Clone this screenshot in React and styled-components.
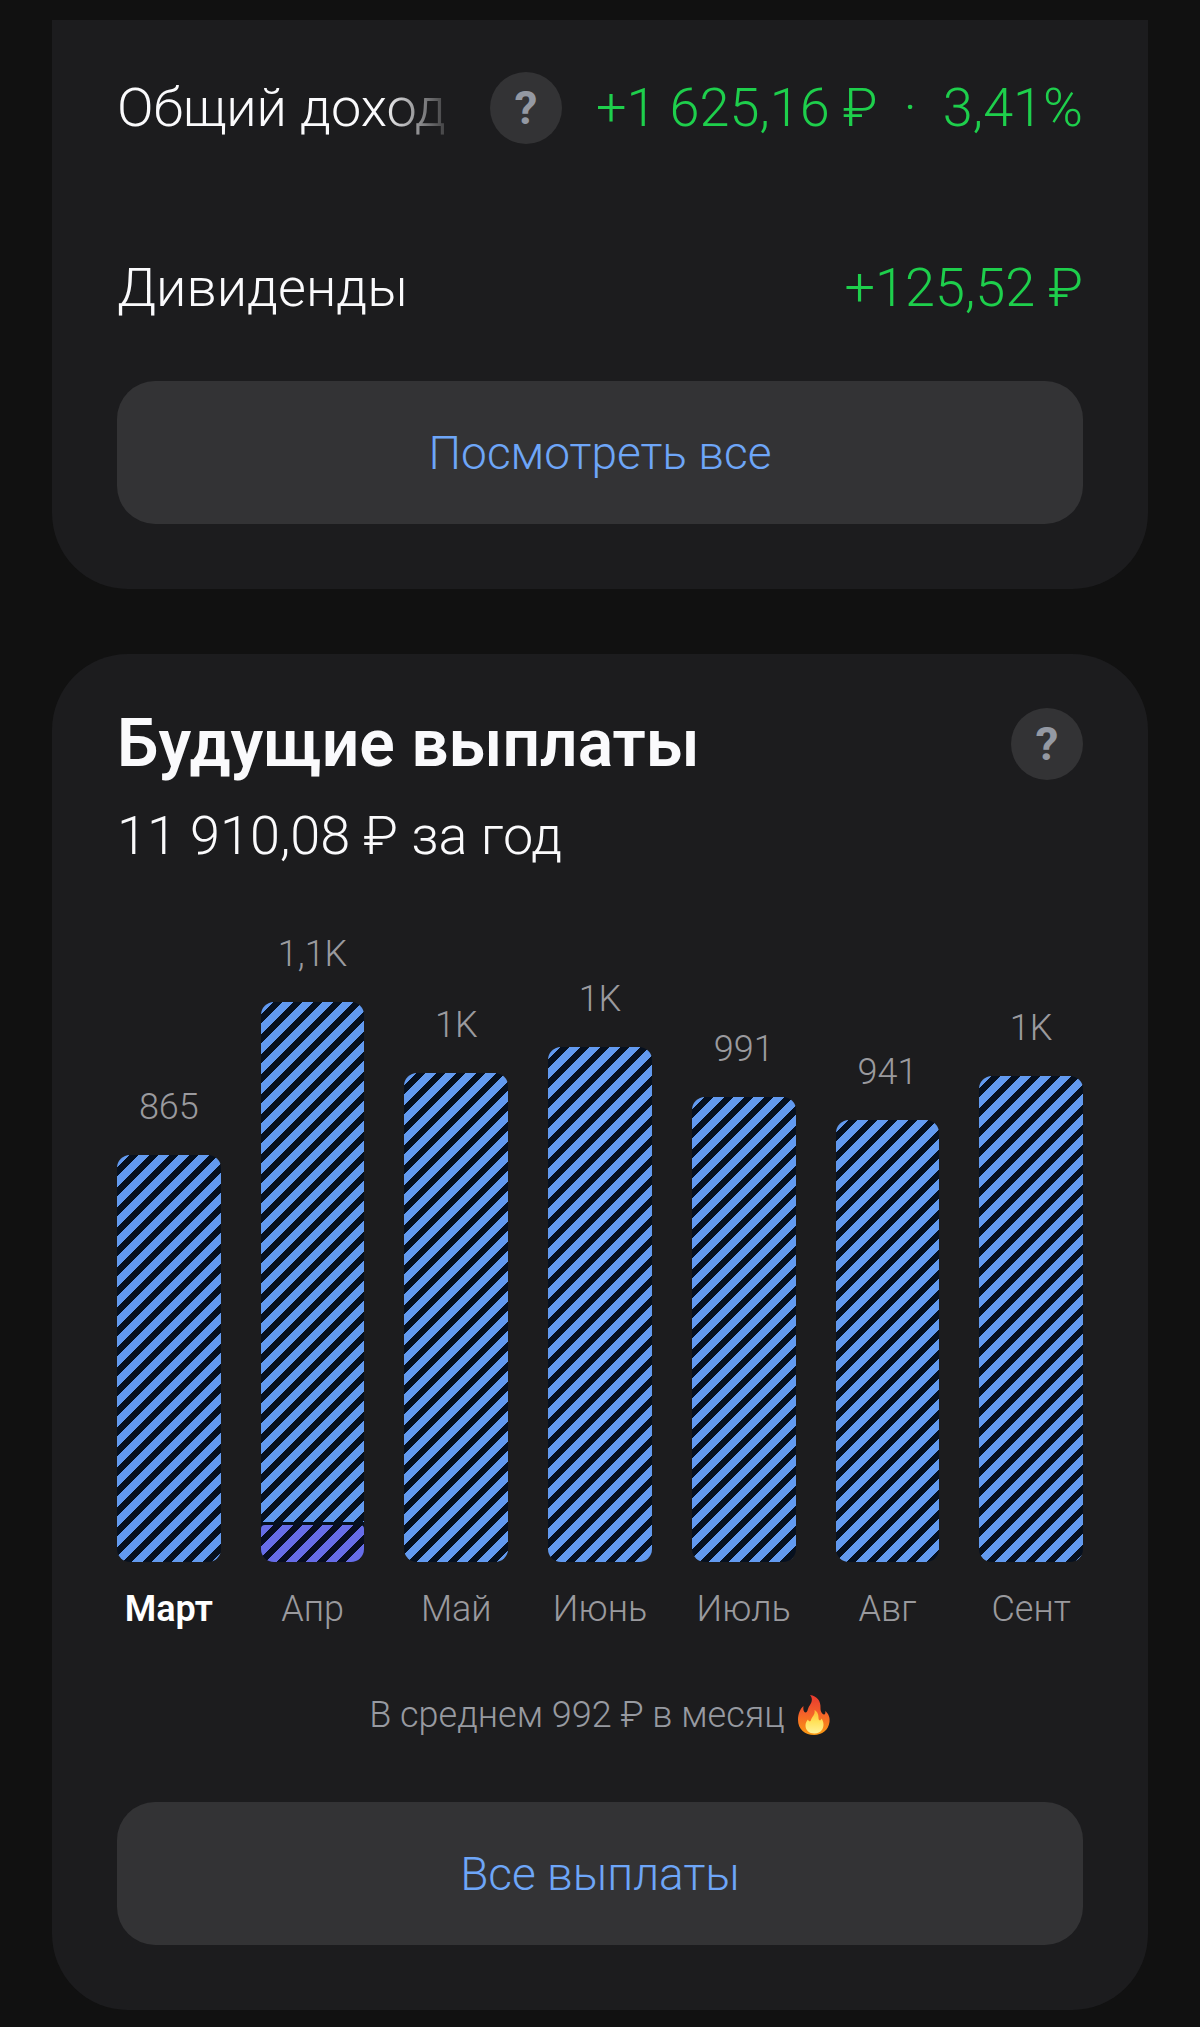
import React from 'react';
import styled, { createGlobalStyle, css } from 'styled-components';

const GlobalStyle = createGlobalStyle`
  * {
    box-sizing: border-box;
  }

  body {
    margin: 0;
    background: #111111;
    color: #fafafc;
    font-family: Roboto, "Noto Sans", sans-serif;
  }
`;

const Page = styled.main`
  display: flex;
  flex-direction: column;
  gap: 65px;
  padding: 20px 52px 17px;
`;

const Card = styled.section`
  display: flex;
  flex-direction: column;
  padding: ${({ $continued }) => ($continued ? '52px' : '54px')} 65px 65px;
  border-radius: ${({ $continued }) => ($continued ? '0 0 76px 76px' : '76px')};
  background: #1c1c1e;
`;

const Rows = styled.dl`
  display: flex;
  flex-direction: column;
  gap: 108px;
  margin: 0 0 57px;
`;

const Row = styled.div`
  display: flex;
  align-items: center;
  justify-content: space-between;
  gap: 34px;
  height: 72px;
  font-size: 54px;
  line-height: 68px;
  font-weight: 300;
  white-space: nowrap;
`;

const RowLabel = styled.dt`
  display: flex;
  align-items: center;
  gap: 32px;
  flex: 1;
  min-width: 0;
`;

const LabelText = styled.span`
  flex: 1;
  min-width: 0;
  overflow: hidden;
  ${({ $fade }) =>
    $fade &&
    css`
      mask-image: linear-gradient(to left, transparent, #000 76px);
    `}
`;

const Amount = styled.dd`
  display: flex;
  gap: 26px;
  margin: 0;
  color: #1ecf4c;
`;

const HelpButton = styled.button`
  flex: none;
  width: 72px;
  height: 72px;
  padding: 0;
  border: none;
  border-radius: 50%;
  background: #333335;
  color: #9499a3;
  font-family: inherit;
  font-size: 46px;
  line-height: 72px;
  font-weight: 700;
  text-align: center;
  cursor: pointer;
`;

const WideButton = styled.button`
  width: 100%;
  height: 143px;
  border: none;
  border-radius: 38px;
  background: #333335;
  color: #6ea6f8;
  font-family: inherit;
  font-size: 46px;
  line-height: 56px;
  font-weight: 300;
  cursor: pointer;
`;

const Header = styled.header`
  display: flex;
  align-items: center;
  justify-content: space-between;
  height: 72px;
`;

const Title = styled.h2`
  margin: 0;
  font-size: 66px;
  line-height: 72px;
  font-weight: 600;
`;

const Total = styled.p`
  margin: 20px 0 62px;
  font-size: 54px;
  line-height: 72px;
  font-weight: 300;
`;

const Chart = styled.ul`
  display: grid;
  grid-template-columns: repeat(7, 1fr);
  align-items: end;
  gap: 40px;
  margin: 0;
  padding: 0;
  list-style: none;
`;

const Column = styled.li`
  display: flex;
  flex-direction: column;
  align-items: center;
  font-size: 36px;
  line-height: 40px;
  font-weight: 300;
  color: #9a9a9e;
  white-space: nowrap;
`;

const Bar = styled.div`
  display: flex;
  flex-direction: column;
  gap: 3px;
  width: 100%;
  margin: 28px 0 27px;
  border-radius: 13px;
  background: #06101f;
  overflow: hidden;
`;

// stripes start from the top left corner of every segment
const Segment = styled.div`
  flex: ${({ $extra }) => ($extra ? '0 0 37px' : '1')};
  border-radius: ${({ $extra }) => ($extra ? '4px' : '0')};
  ${({ $extra }) => {
    const dark = $extra ? '#080d20' : '#06101f';
    const light = $extra ? '#676de8' : '#629af0';
    return css`
      background-image: linear-gradient(
        135deg,
        ${dark} 5%,
        ${light} 5% 31%,
        ${dark} 31% 55%,
        ${light} 55% 81%,
        ${dark} 81%
      );
    `;
  }}
  background-size: 20px 20px;
`;

const Month = styled.span`
  ${({ $current }) =>
    $current &&
    css`
      color: #ffffff;
      font-weight: 600;
    `}
`;

const Average = styled.p`
  display: flex;
  align-items: center;
  justify-content: center;
  gap: 12px;
  margin: 66px 0 67px;
  color: #979aa1;
  font-size: 36px;
  line-height: 40px;
  font-weight: 300;
`;

const FireSvg = styled.svg`
  width: 34px;
  height: 40px;
`;

const payouts = [
  { month: 'Март', label: '865', height: 407, current: true },
  { month: 'Апр', label: '1,1K', height: 560, extra: true },
  { month: 'Май', label: '1K', height: 489 },
  { month: 'Июнь', label: '1K', height: 515 },
  { month: 'Июль', label: '991', height: 465 },
  { month: 'Авг', label: '941', height: 442 },
  { month: 'Сент', label: '1K', height: 486 },
];

const Fire = () => (
  <FireSvg viewBox="0 0 34 40" role="img" aria-label="огонь">
    <defs>
      <linearGradient id="flame" x1="0" y1="0" x2="0" y2="1">
        <stop offset="0" stopColor="#e8382f" />
        <stop offset="0.45" stopColor="#f4602a" />
        <stop offset="1" stopColor="#fb9a12" />
      </linearGradient>
      <linearGradient id="core" x1="0" y1="0" x2="0" y2="1">
        <stop offset="0" stopColor="#ffb52e" />
        <stop offset="0.5" stopColor="#ffe25a" />
        <stop offset="1" stopColor="#fff29a" />
      </linearGradient>
    </defs>
    <path
      fill="url(#flame)"
      d="M13 0C20 1 24 6 23.500 13C23.300 16 25 19 27 19.500C28.500 19.500 28.500 17.500 28.300 16C32 19 33 23 32.500 27C31.500 35 25 40 17 40C8 40 1 34 1 25C1 19 3 14 6.500 11C6 14 6.500 17 8.500 17.500C11 17 10.500 14 12 11.500C14.500 8 16.500 4 13 0Z"
    />
    <path
      fill="url(#core)"
      d="M17.500 15C21 17 21.500 20 21.500 23C21.500 26 24 26 24.500 23.500C27 27 27 31 25.500 34C23.500 37.500 20.500 38.500 17.500 38.500C12 38.500 8.500 35 8.500 30.500C8.500 28 9.500 26 11 24.500C11.500 26.500 13.500 27 14 25C14.500 22 18.500 20 17.500 15Z"
    />
  </FireSvg>
);

const App = () => {
  return (
    <>
      <GlobalStyle />
      <Page>
        <Card $continued>
          <Rows>
            <Row>
              <RowLabel>
                <LabelText $fade>Общий доход</LabelText>
                <HelpButton type="button">?</HelpButton>
              </RowLabel>
              <Amount>
                <span>+1 625,16 ₽</span>
                <span>·</span>
                <span>3,41%</span>
              </Amount>
            </Row>
            <Row>
              <RowLabel>
                <LabelText>Дивиденды</LabelText>
              </RowLabel>
              <Amount>+125,52 ₽</Amount>
            </Row>
          </Rows>
          <WideButton type="button">Посмотреть все</WideButton>
        </Card>

        <Card>
          <Header>
            <Title>Будущие выплаты</Title>
            <HelpButton type="button">?</HelpButton>
          </Header>
          <Total>11 910,08 ₽ за год</Total>
          <Chart>
            {payouts.map(({ month, label, height, current, extra }) => (
              <Column key={month}>
                <span>{label}</span>
                <Bar style={{ height }}>
                  <Segment />
                  {extra && <Segment $extra />}
                </Bar>
                <Month $current={current}>{month}</Month>
              </Column>
            ))}
          </Chart>
          <Average>
            В среднем 992 ₽ в месяц
            <Fire />
          </Average>
          <WideButton type="button">Все выплаты</WideButton>
        </Card>
      </Page>
    </>
  );
};

export default App;
